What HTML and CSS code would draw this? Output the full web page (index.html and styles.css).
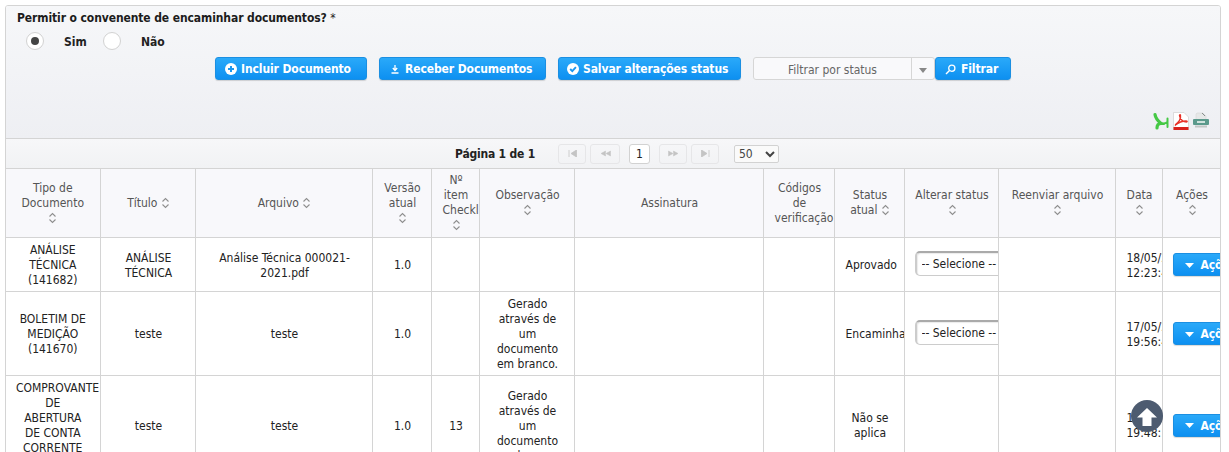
FILE: index.html
```html
<!DOCTYPE html>
<html lang="pt-BR">
<head>
<meta charset="utf-8">
<title>Documentos</title>
<link rel="stylesheet" href="styles.css">
</head>
<body>
<svg class="defs" width="0" height="0">
  <symbol id="sort" viewBox="0 0 9 12"><path d="M1.500 4.500 4.500 1.500 7.500 4.500M1.500 7.500 4.500 10.500 7.500 7.500" fill="none" stroke="#8f8f8f" stroke-width="1.100"/></symbol>
  <symbol id="caret" viewBox="0 0 9 5"><path d="M0 0h9L4.500 5z" fill="#fff"/></symbol>
</svg>

<div class="panel">
  <div class="panel-head">
    <div class="question">Permitir o convenente de encaminhar documentos? <span class="req">*</span></div>
    <div class="radios">
      <span class="radio on"></span><label class="radio-label">Sim</label>
      <span class="radio"></span><label class="radio-label">Não</label>
    </div>
    <div class="actions">
      <button class="btn btn-add">
        <svg width="12" height="12" viewBox="0 0 12 12"><circle cx="6" cy="6" r="6" fill="#fff"/><path d="M6 3v6M3 6h6" stroke="#1a97f0" stroke-width="2"/></svg>
        Incluir Documento
      </button>
      <button class="btn btn-receive">
        <svg width="12" height="12" viewBox="0 0 12 12"><path d="M6 2v4.500M3.800 5 6 7.500 8.200 5M2.500 10h7" fill="none" stroke="#fff" stroke-width="1.300"/></svg>
        Receber Documentos
      </button>
      <button class="btn btn-save">
        <svg width="12" height="12" viewBox="0 0 12 12"><circle cx="6" cy="6" r="6" fill="#fff"/><path d="M3.200 6 5.300 8.200 8.900 4.200" fill="none" stroke="#1a97f0" stroke-width="1.900"/></svg>
        Salvar alterações status
      </button>
      <div class="combo">
        <span class="combo-text">Filtrar por status</span>
        <span class="combo-arrow"></span>
      </div>
      <button class="btn btn-filter">
        <svg width="11" height="11" viewBox="0 0 11 11"><circle cx="6.800" cy="4.200" r="3.100" fill="none" stroke="#fff" stroke-width="1.300"/><path d="M4.500 6.500 1 10" stroke="#fff" stroke-width="1.500"/></svg>
        Filtrar
      </button>
    </div>
    <div class="exports">
      <svg width="18" height="18" viewBox="0 0 18 18"><path d="M3 2.500C3.500 6 6 9 9 11.500 5.500 11.500 5 14 5 16" fill="none" stroke="#45c845" stroke-width="3.200" stroke-linecap="round"/><path d="M8 11C11 12 13.500 11.500 15.500 10M15.500 6.500V15" fill="none" stroke="#45c845" stroke-width="2" stroke-linecap="round"/></svg>
      <svg width="18" height="18" viewBox="0 0 18 18"><path d="M1.500 .5h10.500l4.500 4.500v13h-15z" fill="#fff" stroke="#d0d0d0" stroke-width=".7"/><path d="M3.500 12.500C7 10 9 6 8.500 3c-.5-1-1.500 0-.8 1.500C8.500 7 11 10 14.500 10c1 0 1-1-.5-1C10 9 6.500 10.500 3.500 13z" fill="none" stroke="#e8332a" stroke-width="1.300"/><rect x="1.500" y="15" width="15" height="3" fill="#d8201c"/></svg>
      <svg width="18" height="18" viewBox="0 0 18 18"><path d="M5 1h6l3 3v4H4V2z" fill="#e6e8e8" stroke="#d0d3d2" stroke-width=".5"/><path d="M10 1l3 3" stroke="#8a8f8e"/><rect x="1" y="7" width="16" height="6" rx="1" fill="#5b9a8c"/><path d="M3 14.500h12" stroke="#c2c6c5" stroke-width="2"/><rect x="5" y="9" width="8" height="2" fill="#cfe2dd"/></svg>
    </div>
  </div>

  <div class="pager">
    <b class="pager-text">Página 1 de 1</b>
    <span class="page-btn">
      <svg width="9" height="7" viewBox="0 0 9 7"><path d="M1 0v7M8.500 0v7L3 3.500z" stroke="#c4c4c4" fill="#c4c4c4" stroke-width=".8"/></svg>
    </span>
    <span class="page-btn page-prev">
      <svg width="11" height="7" viewBox="0 0 11 7"><path d="M5.500 1v5L1 3.500zM10.500 1v5L6 3.500z" fill="#c4c4c4" stroke="#c4c4c4" stroke-width=".5"/></svg>
    </span>
    <span class="page-current">1</span>
    <span class="page-btn">
      <svg width="11" height="7" viewBox="0 0 11 7"><path d="M.5 1v5L5 3.500zM5.500 1v5L10 3.500z" fill="#c4c4c4" stroke="#c4c4c4" stroke-width=".5"/></svg>
    </span>
    <span class="page-btn page-last">
      <svg width="9" height="7" viewBox="0 0 9 7"><path d="M8 0v7M.5 0v7L6 3.500z" stroke="#c4c4c4" fill="#c4c4c4" stroke-width=".8"/></svg>
    </span>
    <select class="page-size"><option>50</option></select>
  </div>

  <table class="grid">
    <colgroup>
      <col class="c94"><col class="c95"><col class="c177"><col class="c59"><col class="c48"><col class="c95"><col class="c189"><col class="c71"><col class="c70"><col class="c94"><col class="c117"><col class="c47"><col class="c58">
    </colgroup>
    <thead>
      <tr>
        <th>Tipo de Documento<br><svg class="sort"><use href="#sort"/></svg></th>
        <th>Título <svg class="sort"><use href="#sort"/></svg></th>
        <th>Arquivo <svg class="sort"><use href="#sort"/></svg></th>
        <th>Versão atual<br><svg class="sort"><use href="#sort"/></svg></th>
        <th>Nº item Checklist<br><svg class="sort"><use href="#sort"/></svg></th>
        <th>Observação<br><svg class="sort"><use href="#sort"/></svg></th>
        <th>Assinatura</th>
        <th>Códigos de verificação</th>
        <th>Status atual <svg class="sort"><use href="#sort"/></svg></th>
        <th class="th-tight">Alterar status<br><svg class="sort"><use href="#sort"/></svg></th>
        <th>Reenviar arquivo<br><svg class="sort"><use href="#sort"/></svg></th>
        <th>Data<br><svg class="sort"><use href="#sort"/></svg></th>
        <th>Ações<br><svg class="sort"><use href="#sort"/></svg></th>
      </tr>
    </thead>
    <tbody>
      <tr>
        <td>ANÁLISE TÉCNICA (141682)</td>
        <td>ANÁLISE TÉCNICA</td>
        <td>Análise Técnica 000021-2021.pdf</td>
        <td>1.0</td>
        <td></td>
        <td></td>
        <td></td>
        <td></td>
        <td>Aprovado</td>
        <td><select class="status-select"><option>-- Selecione --</option></select></td>
        <td></td>
        <td>18/05/2021 12:23:41</td>
        <td><button class="btn btn-acoes"><svg class="caret"><use href="#caret"/></svg> Ações</button></td>
      </tr>
      <tr>
        <td>BOLETIM DE MEDIÇÃO (141670)</td>
        <td>teste</td>
        <td>teste</td>
        <td>1.0</td>
        <td></td>
        <td>Gerado através de um documento em branco.</td>
        <td></td>
        <td></td>
        <td>Encaminhado</td>
        <td><select class="status-select"><option>-- Selecione --</option></select></td>
        <td></td>
        <td>17/05/2021 19:56:42</td>
        <td><button class="btn btn-acoes"><svg class="caret"><use href="#caret"/></svg> Ações</button></td>
      </tr>
      <tr>
        <td>COMPROVANTE DE ABERTURA DE CONTA CORRENTE (141669)</td>
        <td>teste</td>
        <td>teste</td>
        <td>1.0</td>
        <td>13</td>
        <td>Gerado através de um documento em branco.</td>
        <td></td>
        <td></td>
        <td>Não se aplica</td>
        <td></td>
        <td></td>
        <td>17/05/2021 19:48:10</td>
        <td><button class="btn btn-acoes"><svg class="caret"><use href="#caret"/></svg> Ações</button></td>
      </tr>
    </tbody>
  </table>
</div>

<a class="to-top" href="#">
  <svg width="32" height="32" viewBox="0 0 32 32"><circle cx="16" cy="16" r="16" fill="#4d5b70"/><path d="M16 8 26 17.500H20.500V26H11.500V17.500H6z" fill="#fff"/></svg>
</a>
</body>
</html>
```

FILE: styles.css
```css
html, body {height:100%; overflow:hidden;}
body {margin:0; padding:5px 0 0 5px; background:#fff; box-sizing:border-box; font:12px "DejaVu Sans Condensed", "DejaVu Sans", sans-serif; color:#222;}
.defs {position:absolute;}

.panel {width:1216px; box-sizing:border-box; border:1px solid #d4d4d4; border-radius:3px 3px 0 0; overflow:hidden;}
.panel-head {height:133px; box-sizing:border-box; padding:5px 0 0 11px; background:linear-gradient(#f6f7f9, #eeeff3); border-bottom:1px solid #d4d4d4; display:flex; flex-direction:column;}
.question {font-weight:bold; line-height:15px; letter-spacing:-.1px; color:#1c1c1c;}
.req {font-weight:normal;}

.radios {display:flex; align-items:center; margin:6px 0 0 9px; height:18px;}
.radio {width:16px; height:16px; border:1px solid #d2d2d2; border-radius:50%; background:#fff; display:flex; align-items:center; justify-content:center;}
.radio.on::after {content:""; width:8px; height:8px; border-radius:50%; background:#444;}
.radio-label {font-weight:bold; margin:2px 22px 0 20px; width:22px; color:#222;}
.radio-label + .radio {margin-left:-5px;}

.actions {display:flex; justify-content:center; align-items:center; margin:7px 0 0 -11px;}
.btn {height:23px; box-sizing:border-box; border:1px solid #1b8fe2; border-radius:3px; background:linear-gradient(#2aa9f9, #0d90f1); color:#fff; font:bold 12px "DejaVu Sans Condensed", "DejaVu Sans", sans-serif; letter-spacing:-.1px; padding:1px 0 0 9px; margin-right:12px; display:flex; align-items:center; gap:4px; white-space:nowrap; box-shadow:0 1px 1px rgba(0,0,0,.15);}
.btn-add {width:152px;}
.btn-receive {width:167px;}
.btn-save {width:183px; padding-left:8px;}
.btn-filter {width:76px; margin:0; gap:5px;}

.combo {width:182px; height:23px; box-sizing:border-box; border:1px solid #d6d6d6; border-radius:3px; background:#f9f9fb; display:flex; color:#666;}
.combo-text {flex:1; text-align:center; line-height:24px;}
.combo-arrow {width:22px; border-left:1px solid #d6d6d6; position:relative;}
.combo-arrow::after {content:""; position:absolute; left:7px; top:10px; border:4px solid transparent; border-top:5px solid #888; border-bottom:0;}

.exports {display:flex; justify-content:flex-end; gap:2px; margin:32px 10px 0 0;}

.pager {height:29px; background:linear-gradient(#f7f7f9, #f1f2f4); display:flex; align-items:center; padding-left:449px; box-sizing:border-box;}
.pager-text {width:103px; letter-spacing:-.2px; color:#222;}
.page-btn {width:28px; height:20px; box-sizing:border-box; border:1px solid #e6e6e8; border-radius:3px; display:flex; align-items:center; justify-content:center; margin-right:4px;}
.page-prev {width:30px; margin-right:9px;}
.page-last {margin-right:14px;}
.page-current {width:21px; height:20px; box-sizing:border-box; border:1px solid #d2d2d2; border-radius:3px; background:#fff; text-align:center; line-height:18px; margin-right:9px;}
.page-size {width:45px; height:18px; margin-left:1px; padding:0; border:1px solid #d2d2d2; border-radius:2px; background:#fafafa; font:12px "DejaVu Sans Condensed", "DejaVu Sans", sans-serif; color:#444;}

.grid {table-layout:fixed; width:1214px; border-collapse:collapse; background:#fff;}
.c94 {width:94px;}
.c95 {width:95px;}
.c177 {width:177px;}
.c59 {width:59px;}
.c48 {width:48px;}
.c189 {width:189px;}
.c71 {width:71px;}
.c70 {width:70px;}
.c117 {width:117px;}
.c47 {width:47px;}
.c58 {width:58px;}
.grid th, .grid td {border:1px solid #d4d4d4; padding:4px 9px 4px 11px; text-align:center; line-height:15px; overflow:hidden; font-size:12px;}
.grid td {padding-top:5px; padding-bottom:3px;}
.grid th {background:#f8f8fb; font-weight:normal; color:#555;}
.grid th.th-tight {padding-left:2px; padding-right:0;}
.grid thead th:first-child, .grid tbody td:first-child {border-left:0; padding-left:10px; padding-right:10px;}
.sort {width:9px; height:12px; vertical-align:-2px;}

.status-select {width:170px; height:25px; display:block; box-sizing:border-box; margin:0 0 4px -1px; padding:0 0 0 1px; border:1px solid #ccc; border-top:2px solid #aaa; border-left:2px solid #ccc; border-radius:5px; background:#fff; box-shadow:inset 1px 1px 1px rgba(0,0,0,.08); font:12px "DejaVu Sans Condensed", "DejaVu Sans", sans-serif; color:#222;}

.btn-acoes {width:70px; margin:0 0 2px -1px; padding:1px 0 0 11px; gap:7px;}
.caret {width:9px; height:5px;}

.to-top {position:fixed; left:1131px; top:400px; width:32px; height:32px;}
```
